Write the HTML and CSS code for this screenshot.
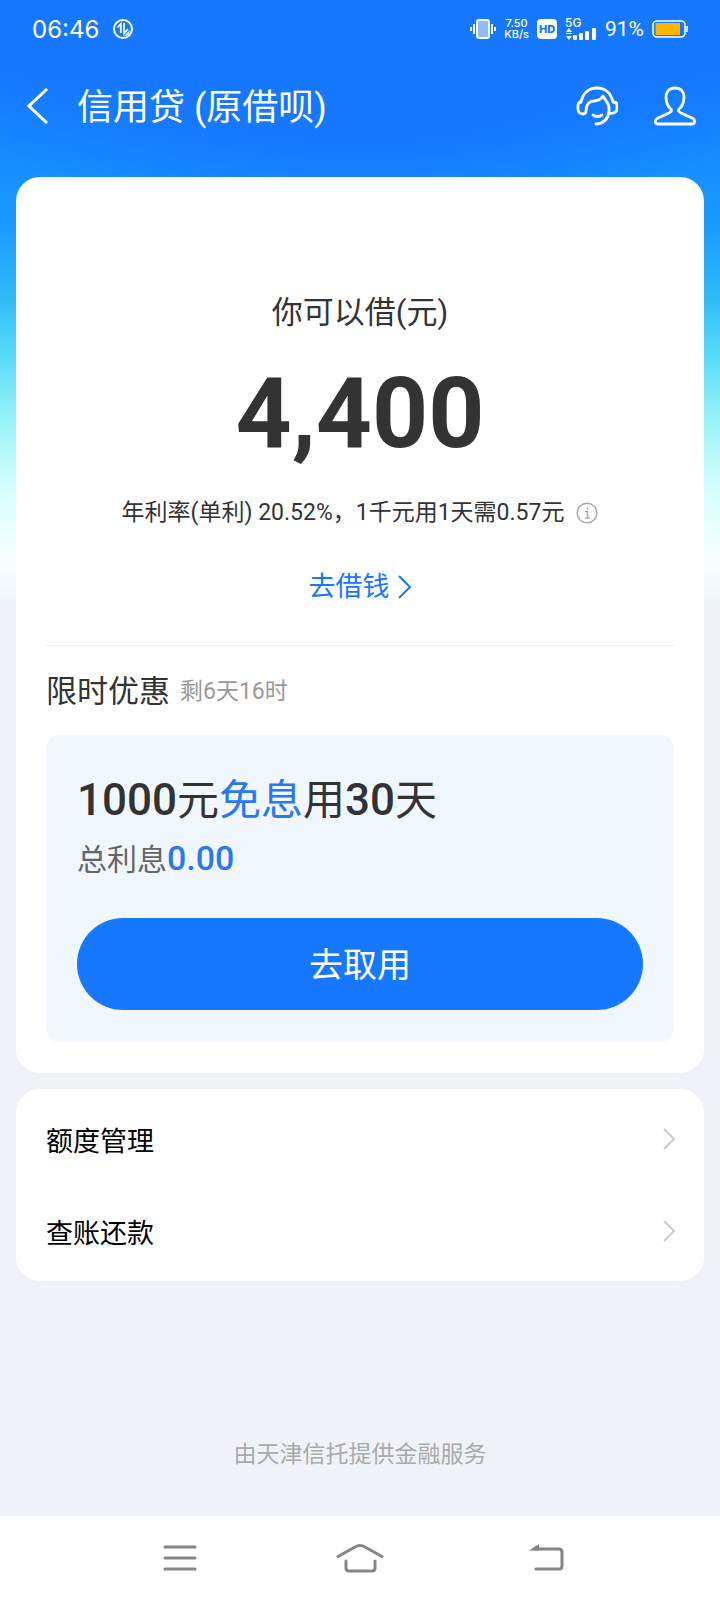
FILE: index.html
```
<!DOCTYPE html>
<html lang="zh-CN">
<head>
<meta charset="utf-8">
<meta name="viewport" content="width=device-width, initial-scale=1">
<title>信用贷 (原借呗)</title>
<link rel="stylesheet" href="styles.css">
</head>
<body>
<div class="app">
  <div class="status">
    <span class="status-time">06:46</span>
    <svg class="status-data" width="20" height="20" viewBox="0 0 20 20" fill="none" stroke="#fff" stroke-width="2">
      <circle cx="10" cy="10" r="9"/>
      <path d="M4.5 8.5 7.8 5V14M11 4v10.5l4-4.5" stroke-width="1.8"/>
      <path d="M11 17l6-6-1 4-3 2z" fill="#fff" stroke="none"/>
    </svg>
    <div class="status-right">
      <svg width="26" height="22" viewBox="0 0 26 22" fill="none" stroke="#fff" stroke-width="2">
        <rect x="7" y="2" width="12" height="18" rx="2" fill="#8fbcff"/>
        <path d="M1 9v4M4 6v10M22 6v10M25 9v4"/>
      </svg>
      <span class="speed"><b>7.50</b><b>KB/s</b></span>
      <span class="hd">HD</span>
      <span class="signal">
        <b>5G</b>
        <svg width="32" height="12" viewBox="0 0 32 12" fill="#fff">
          <path d="M4 0l3 4H1zM4 12l3-4H1zM1 5h6v1H1z"/>
          <rect x="8" y="7" width="4" height="5" rx="1"/>
          <rect x="14" y="5" width="4" height="7" rx="1"/>
          <rect x="20" y="3" width="4" height="9" rx="1"/>
          <rect x="27" y="0" width="4" height="12" rx="1"/>
        </svg>
      </span>
      <span class="percent">91%</span>
      <svg width="36" height="18" viewBox="0 0 36 18" fill="none" stroke="#fff" stroke-width="1.6">
        <rect x="1" y="1" width="32" height="16" rx="4"/>
        <path d="M35 6v6"/>
        <rect x="3.5" y="3" width="24.5" height="12" rx="1" fill="#ffb400" stroke="none"/>
      </svg>
    </div>
  </div>

  <header class="header">
    <button class="icon-btn back" aria-label="返回">
      <svg width="22" height="36" viewBox="0 0 22 36" fill="none" stroke="#fff" stroke-width="3"><path d="M20 1 2 18l18 17"/></svg>
    </button>
    <h1 class="title">信用贷 (原借呗)</h1>
    <button class="icon-btn" aria-label="客服">
      <svg width="42" height="40" viewBox="0 0 42 40" fill="none" stroke="#fff" stroke-width="2.8" stroke-linecap="round" stroke-linejoin="round">
        <path d="M5 16C7 7 13 2 21 2s14 5 16 14"/>
        <path d="M5 16c-2 0-3 1-3 3v4c0 3 2 5 5 5 2 0 3-1 3-3 0-7 4-10 8-10 5 0 7-2 9-5 1 3 6 6 6 12v5c4 1 8-1 8-4v-4c0-2-2-3-4-3"/>
        <path d="M33 26c-1 7-6 12-13 12M17 29c2 2 7 2 9 0"/>
      </svg>
    </button>
    <button class="icon-btn" aria-label="我的">
      <svg width="42" height="40" viewBox="0 0 42 40" fill="none" stroke="#fff" stroke-width="2.8" stroke-linejoin="round">
        <path d="M21 2c-6 0-9 4-9 9 0 6 1 9 5 12 1 2 0 3-2 4L4 32c-4 2-3 6 0 6h34c3 0 4-4 0-6l-11-5c-2-1-3-2-2-4 4-3 5-6 5-12 0-5-3-9-9-9z"/>
      </svg>
    </button>
  </header>

  <main class="content">
    <section class="card loan">
      <p class="loan-label">你可以借(元)</p>
      <p class="amount">4,400</p>
      <p class="rate">年利率(单利) 20.52%，1千元用1天需0.57元
        <svg width="22" height="22" viewBox="0 0 22 22" fill="none" stroke="#aaa" stroke-width="1.5"><circle cx="11" cy="11" r="9.8"/><path d="M9 9.500h2.500V16M9 16h5M11.500 5.500v2"/></svg>
      </p>
      <a class="borrow" href="#">去借钱
        <svg width="14" height="24" viewBox="0 0 14 24" fill="none" stroke="currentColor" stroke-width="2"><path d="M1 1l11 11L1 23"/></svg>
      </a>
      <div class="offer-head">
        <h2 class="offer-title">限时优惠</h2>
        <span class="offer-left">剩6天16时</span>
      </div>
      <div class="offer">
        <p class="offer-main"><span class="num">1000</span>元<span class="blue">免息</span>用<span class="num">30</span>天</p>
        <p class="offer-sub">总利息<span class="zero">0.00</span></p>
        <button class="take">去取用</button>
      </div>
    </section>

    <nav class="card list">
      <a class="row" href="#">额度管理
        <svg width="14" height="22" viewBox="0 0 14 22" fill="none" stroke="#ccc" stroke-width="2"><path d="M2 1l10 10L2 21"/></svg>
      </a>
      <a class="row" href="#">查账还款
        <svg width="14" height="22" viewBox="0 0 14 22" fill="none" stroke="#ccc" stroke-width="2"><path d="M2 1l10 10L2 21"/></svg>
      </a>
    </nav>
  </main>

  <footer class="provider">由天津信托提供金融服务</footer>

  <div class="system-nav">
    <button class="icon-btn" aria-label="最近任务">
      <svg width="48" height="30" viewBox="0 0 48 30" fill="none" stroke="#858585" stroke-width="3" stroke-linecap="round"><path d="M9 4h30M9 15h30M9 26h30"/></svg>
    </button>
    <button class="icon-btn" aria-label="主页">
      <svg width="48" height="30" viewBox="0 0 48 30" fill="none" stroke="#858585" stroke-width="3" stroke-linecap="round"><path d="M2 13.500 19 4q5-3 10 0l17 9.500M10 18v7q0 3 3 3h23q3 0 3-3v-7"/></svg>
    </button>
    <button class="icon-btn" aria-label="返回上一页">
      <svg width="48" height="30" viewBox="0 0 48 30" fill="none" stroke="#858585" stroke-width="3" stroke-linecap="round"><path d="M18 6h25q3 0 3 3v14q0 3-3 3H20"/><path d="M13 7.500 23 1v6.500z" fill="#858585" stroke="none"/></svg>
    </button>
  </div>
</div>
</body>
</html>
```

FILE: styles.css
```
* {
  box-sizing: border-box;
}

body {
  margin: 0;
  background: #eff3f8;
  color: #333;
  font-family: Roboto, "Noto Sans CJK SC", sans-serif;
}

h1, h2, p {
  margin: 0;
  font-weight: 400;
}

a {
  text-decoration: none;
}

svg {
  flex: none;
}

.app {
  display: flex;
  flex-direction: column;
  min-height: 100vh;
  background:
    radial-gradient(ellipse 65% 240px at 50% 0, #1677ff 55%, rgba(22, 119, 255, 0) 100%),
    linear-gradient(#1677ff 60px, #158eff 160px, #1a9cff 230px, #2fbdf8 300px, #55d8f8 350px, #84ecf8 400px, #b4f8fb 450px, #dcfffd 500px, #f6ffff 560px, #eff3f8 605px);
}

.status {
  display: flex;
  align-items: center;
  height: 58px;
  padding: 0 32px;
  color: #fff;
}

.status-time {
  margin-right: 14px;
  font-family: Inter, sans-serif;
  font-size: 24px;
}

.status-right {
  display: flex;
  align-items: center;
  gap: 8px;
  margin-left: auto;
}

.speed {
  display: flex;
  flex-direction: column;
  font: 11px/11px Inter, sans-serif;
  text-align: center;
}

.speed b,
.signal b {
  font-weight: 500;
}

.hd {
  width: 20px;
  border-radius: 4px;
  background: #fff;
  color: #1677ff;
  font: 800 11px/20px Inter, sans-serif;
  text-align: center;
}

.signal {
  display: flex;
  flex-direction: column;
  font: 12px/10px Inter, sans-serif;
}

.percent {
  font-size: 21px;
}

.header {
  display: flex;
  align-items: center;
  gap: 36px;
  height: 96px;
  padding: 0 24px 0 27px;
  color: #fff;
}

.icon-btn {
  display: flex;
  padding: 0;
  border: 0;
  background: none;
}

.title {
  flex: 1;
  margin-left: -8px;
  padding-bottom: 4px;
  font-size: 36px;
}

.content {
  display: grid;
  gap: 16px;
  padding: 23px 16px 0;
}

.card {
  border-radius: 24px;
  background: #fff;
}

.loan {
  display: flex;
  flex-direction: column;
  align-items: center;
  padding: 114px 30px 31px;
}

.loan-label {
  font-size: 31px;
  line-height: 44px;
}

.amount {
  margin-top: 22px;
  font-size: 98px;
  font-weight: 700;
  line-height: 114px;
}

.rate {
  display: flex;
  align-items: center;
  gap: 12px;
  margin-top: 24px;
  font-size: 23px;
  line-height: 36px;
}

.borrow {
  display: flex;
  align-items: center;
  gap: 8px;
  margin-top: 36px;
  color: #1677ff;
  font-size: 27px;
  line-height: 40px;
}

.offer-head {
  display: flex;
  align-items: center;
  gap: 10px;
  align-self: stretch;
  height: 90px;
  margin-top: 38px;
  padding-bottom: 4px;
  border-top: 1px solid #eee;
}

.offer-title {
  font-size: 31px;
}

.offer-left {
  color: #999;
  font-size: 23px;
}

.offer {
  align-self: stretch;
  padding: 32px 31px;
  border-radius: 14px;
  background: #f0f7ff;
}

.offer-main {
  font-size: 42px;
  line-height: 66px;
}

.num {
  font-size: 44px;
  font-weight: 500;
}

.blue {
  color: #2b77f2;
}

.offer-sub {
  color: #666;
  font-size: 30px;
  line-height: 48px;
}

.zero {
  color: #2b77f2;
  font-size: 34px;
  font-weight: 500;
}

.take {
  display: block;
  width: 100%;
  height: 92px;
  margin-top: 34px;
  padding: 0 0 4px;
  border: 0;
  border-radius: 46px;
  background: #1677ff;
  color: #fff;
  font: inherit;
  font-size: 34px;
}

.list {
  padding: 4px 28px 4px 30px;
}

.row {
  display: flex;
  align-items: center;
  justify-content: space-between;
  height: 92px;
  color: #000;
  font-size: 27px;
}

.provider {
  margin-top: auto;
  padding: 40px 0 44px;
  color: #aaa;
  font-size: 23px;
  line-height: 34px;
  text-align: center;
}

.system-nav {
  display: grid;
  grid-template-columns: repeat(3, 25%);
  justify-content: center;
  justify-items: center;
  align-items: center;
  height: 84px;
  background: #fff;
}
```
